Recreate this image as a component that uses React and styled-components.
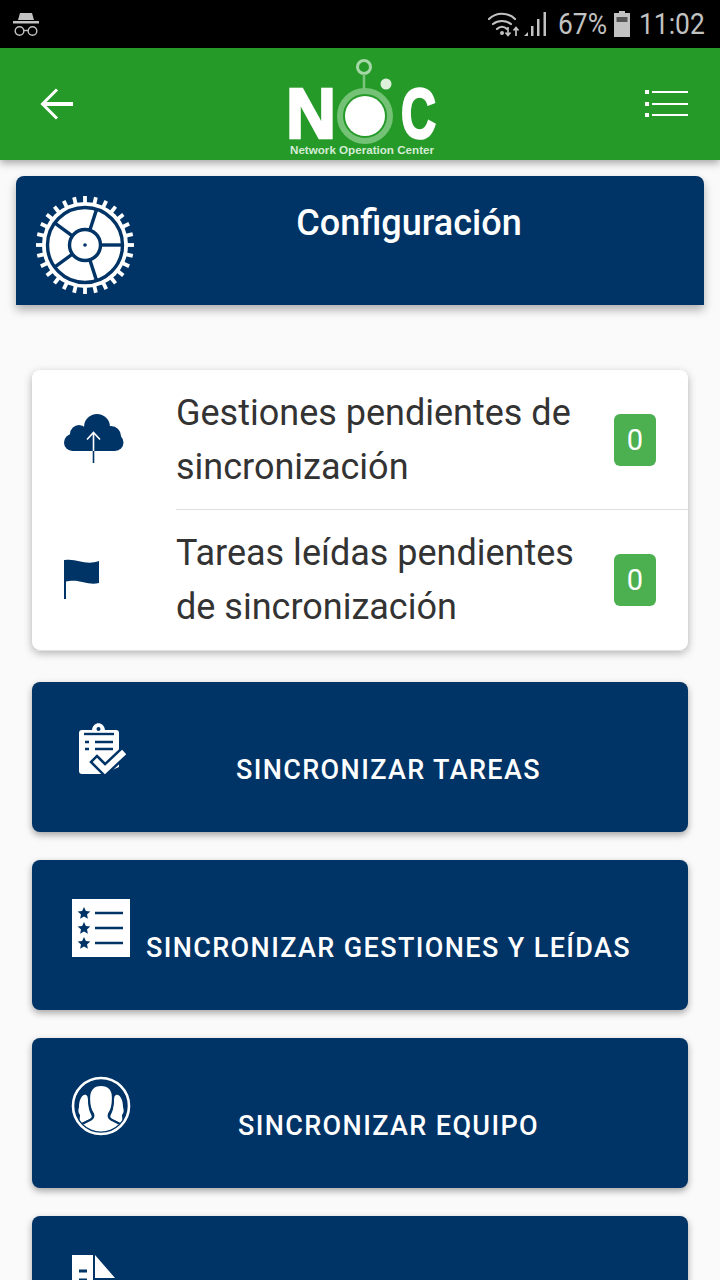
import React from "react";
import styled, { createGlobalStyle } from "styled-components";

const navy = "#003366";

const GlobalStyle = createGlobalStyle`
  html, body {
    margin: 0;
    padding: 0;
    background: #fafafa;
  }
  body {
    font-family: Roboto, "Liberation Sans", sans-serif;
  }
`;

const Page = styled.div`
  width: 720px;
  height: 1280px;
  overflow: hidden;
  background: #fafafa;
`;

const StatusBar = styled.div`
  height: 48px;
  background: #000;
  display: flex;
  align-items: center;
  justify-content: space-between;
  padding: 0 15px 0 13px;
  color: #c2c2c2;
`;

const StatusRight = styled.div`
  display: flex;
  align-items: center;
`;

const StatusText = styled.span`
  font-size: 30px;
  line-height: 48px;
  display: inline-block;
  transform: scaleX(0.88);
  transform-origin: left center;
  margin-left: ${(p) => p.$left}px;
  width: ${(p) => p.$width}px;
  white-space: nowrap;
`;

const BatterySlot = styled.span`
  margin-left: 8px;
  line-height: 0;
`;

const Header = styled.header`
  height: 112px;
  background: #259a29;
  box-shadow: 0 3px 8px rgba(0, 0, 0, 0.35);
  display: flex;
  align-items: center;
  justify-content: space-between;
  padding: 0 31px 0 40px;
  position: relative;
`;

const LogoSlot = styled.div`
  margin-left: 18px;
  line-height: 0;
`;

const TitleBar = styled.div`
  margin: 16px 16px 0;
  height: 129px;
  background: ${navy};
  border-radius: 8px 8px 0 0;
  box-shadow: 0 5px 10px rgba(0, 0, 0, 0.3);
  display: flex;
  align-items: flex-start;
  padding: 20px 0 0 20px;
  box-sizing: border-box;
`;

const Title = styled.h1`
  flex: 1;
  margin: 4px 0 0;
  padding-right: 20px;
  text-align: center;
  color: #fff;
  font-size: 36px;
  line-height: 46px;
  font-weight: 500;
`;

const PendingCard = styled.section`
  position: relative;
  margin: 65px 32px 0;
  background: #fff;
  border-radius: 8px;
  box-shadow: 0 3px 8px rgba(0, 0, 0, 0.3);

  &::after {
    content: "";
    position: absolute;
    left: -2px;
    right: -2px;
    bottom: -1px;
    height: 1px;
    background: #e2e2e2;
  }
`;

const PendingRow = styled.div`
  height: 140px;
  display: flex;
  box-sizing: border-box;
`;

const PendingIcon = styled.div`
  width: 144px;
  flex: none;
  padding: ${(p) => p.$top}px 0 0 32px;
  box-sizing: border-box;
`;

const PendingBody = styled.div`
  flex: 1;
  display: flex;
  align-items: center;
  justify-content: space-between;
  padding-right: 32px;
  border-bottom: ${(p) => (p.$last ? "none" : "1px solid #dedede")};
`;

const PendingText = styled.div`
  color: #333;
  font-size: 36px;
  line-height: 54px;
  width: 410px;
`;

const Badge = styled.span`
  width: 42px;
  height: 52px;
  border-radius: 6px;
  background: #4caf50;
  color: #fff;
  font-size: 29px;
  display: flex;
  align-items: center;
  justify-content: center;
`;

const Actions = styled.div`
  margin: 32px 32px 0;
  display: flex;
  flex-direction: column;
  gap: 28px;
`;

const ActionButton = styled.button`
  position: relative;
  height: 150px;
  flex: none;
  border: 0;
  border-radius: 8px;
  background: ${navy};
  box-shadow: 0 3px 7px rgba(0, 0, 0, 0.35);
  color: #fff;
  font-family: Roboto, "Liberation Sans", sans-serif;
  font-size: 27px;
  font-weight: 500;
  letter-spacing: 1.38px;
  padding: 26px 0 0 57px;
  text-align: center;
`;

const ActionIcon = styled.span`
  position: absolute;
  left: ${(p) => p.$left}px;
  top: ${(p) => p.$top}px;
  display: block;
  line-height: 0;
`;

const Incognito = () => (
  <svg width="26" height="26" viewBox="0 0 26 26">
    <path d="M7 2h12l2 7H5z" fill="#c2c2c2" />
    <rect x="0" y="10" width="26" height="2.5" fill="#c2c2c2" />
    <circle cx="6.5" cy="20" r="4.3" fill="none" stroke="#c2c2c2" strokeWidth="1.4" />
    <circle cx="19.5" cy="20" r="4.3" fill="none" stroke="#c2c2c2" strokeWidth="1.4" />
    <path d="M11 19.5h4" stroke="#c2c2c2" strokeWidth="1.4" />
  </svg>
);

const WifiSignal = () => (
  <svg width="62" height="28" viewBox="0 0 62 28">
    <g fill="none" stroke="#c2c2c2" strokeWidth="2.2" strokeLinecap="round">
      <path d="M1 9C8 2 20 2 27 9" />
      <path d="M5 14c5-4 13-4 18 0" />
      <path d="M9 19c3-3 7-3 10 0" />
    </g>
    <circle cx="14" cy="23" r="2" fill="#c2c2c2" />
    <path d="M20 17v8M17.5 22.5l2.5 3 2.5-3M28 26v-8M25.5 20.5l2.5-3 2.5 3" fill="none" stroke="#c2c2c2" strokeWidth="1.7" />
    <path d="M36 26l4-4v4zM43 26V16h2.5v10zM49 26V9h2.5v17zM55.5 26V2H58v24z" fill="#c2c2c2" />
  </svg>
);

const Battery = () => (
  <svg width="16" height="26" viewBox="0 0 16 26">
    <path d="M5 0h6v2h5v24H0V2h5z" fill="#c2c2c2" />
    <rect x="2.5" y="6" width="11" height="5" fill="#555" />
  </svg>
);

const BackArrow = () => (
  <svg width="33" height="32" viewBox="0 0 33 32" fill="none" stroke="#fff">
    <path d="M3 16h30" strokeWidth="4" />
    <path d="M17 1.5L2.5 16 17 30.5" strokeWidth="3" />
  </svg>
);

const MenuIcon = () => (
  <svg width="44" height="30" viewBox="0 0 44 30" fill="#fff">
    <rect x="0" y="1" width="4" height="4" />
    <rect x="0" y="13" width="4" height="4" />
    <rect x="0" y="24" width="4" height="4" />
    <rect x="7" y="2" width="36" height="2" />
    <rect x="7" y="14" width="36" height="2" />
    <rect x="7" y="25" width="36" height="2" />
  </svg>
);

const Logo = () => (
  <svg width="170" height="104" viewBox="-6 0 170 104">
    <text x="-3" y="86" fill="#fff" stroke="#fff" strokeWidth="2.6" fontFamily="Liberation Sans" fontWeight="700" fontSize="70" textLength="50" lengthAdjust="spacingAndGlyphs">N</text>
    <text x="112" y="86" fill="#fff" stroke="#fff" strokeWidth="2.6" fontFamily="Liberation Sans" fontWeight="700" fontSize="70" textLength="35" lengthAdjust="spacingAndGlyphs">C</text>
    <circle cx="76" cy="64" r="25" fill="none" stroke="#73c275" strokeWidth="6" />
    <circle cx="76" cy="64" r="20" fill="#fff" />
    <circle cx="75" cy="15" r="6.5" fill="none" stroke="#a5d8a6" strokeWidth="3" />
    <path d="M75 22v15" stroke="#7cc57e" strokeWidth="2.5" />
    <circle cx="97" cy="32" r="5.5" fill="#dcf0dc" />
    <text x="1" y="102" fill="#d4ecd4" fontFamily="Liberation Sans" fontWeight="700" fontSize="11" textLength="144" lengthAdjust="spacingAndGlyphs">Network Operation Center</text>
  </svg>
);

const gearTeeth = Array.from({ length: 28 }, (_, i) => (i * 360) / 28);
const gearSpokes = [0, 72, 144, 216, 288];

const Gear = () => (
  <svg width="98" height="98" viewBox="-49 -49 98 98">
    {gearTeeth.map((angle) => (
      <rect key={angle} x="-1.9" y="-49" width="3.8" height="8" fill="#fff" transform={`rotate(${angle})`} />
    ))}
    <circle r="43" fill="#fff" />
    <circle r="37.5" fill="#fff" stroke={navy} strokeWidth="3.4" />
    {gearSpokes.map((angle) => (
      <rect key={angle} x="14" y="-1.7" width="24" height="3.4" fill={navy} transform={`rotate(${angle})`} />
    ))}
    <circle r="15.5" fill="#fff" stroke={navy} strokeWidth="3.4" />
    <circle r="1.8" fill={navy} />
  </svg>
);

const CloudUp = () => (
  <svg width="60" height="52" viewBox="0 0 60 52">
    <g fill={navy}>
      <circle cx="33" cy="15" r="13" />
      <circle cx="15" cy="22" r="9" />
      <circle cx="47" cy="24" r="10" />
      <rect x="0" y="22" width="59.5" height="17" rx="8.5" />
    </g>
    <path d="M29.5 39V21M23 27.5l6.5-7 6.5 7" fill="none" stroke="#fff" strokeWidth="1.6" />
    <path d="M29.5 39v12" stroke={navy} strokeWidth="1.6" />
  </svg>
);

const Flag = () => (
  <svg width="36" height="40" viewBox="0 0 36 40">
    <path d="M0 1h2v39H0z" fill={navy} />
    <path d="M1 1c12-2 20 6 34 1v22c-12 3-20-5-34-1z" fill={navy} />
  </svg>
);

const ClipboardCheck = () => (
  <svg width="48" height="54" viewBox="0 0 48 54">
    <path d="M3 8h10c1-9 12-9 13 0h11c2 0 3 1 3 3v34L24 52H3c-2 0-3-1-3-3V11c0-2 1-3 3-3z" fill="#fff" />
    <circle cx="19.5" cy="7" r="2" fill={navy} />
    <path d="M5 12h30" stroke={navy} strokeWidth="2.4" />
    <path d="M16 20h18M16 27h18" stroke={navy} strokeWidth="2.6" />
    <path d="M6 20h4M6 27h4" stroke={navy} strokeWidth="2.6" />
    <path d="M18 40l8 8 17-16" fill="none" stroke={navy} strokeWidth="11" strokeLinecap="square" />
    <path d="M18 40l8 8 17-16" fill="none" stroke="#fff" strokeWidth="6" strokeLinecap="square" />
  </svg>
);

const StarRow = ({ y }) => (
  <g fill={navy}>
    <path d={`M12 ${y - 6}l1.9 4 4.4.5-3.3 3 .9 4.3-3.9-2.2-3.9 2.2.9-4.3-3.3-3 4.4-.5z`} />
    <rect x="23" y={y - 1.25} width="28" height="2.5" />
  </g>
);

const StarList = () => (
  <svg width="58" height="58" viewBox="0 0 58 58">
    <rect width="58" height="58" fill="#fff" />
    <StarRow y={14} />
    <StarRow y={29} />
    <StarRow y={44} />
  </svg>
);

const TeamCircle = () => (
  <svg width="60" height="60" viewBox="0 0 60 60">
    <defs>
      <clipPath id="team-disc">
        <circle cx="30" cy="30" r="25.5" />
      </clipPath>
    </defs>
    <circle cx="30" cy="30" r="28" fill="none" stroke="#fff" strokeWidth="2.6" />
    <g clipPath="url(#team-disc)" fill="#fff">
      <path d="M13 19c3-1 4 2 4 5l1 9c1 4 3 6 3 9l-12 6c-1-3 0-6 0-9-2-2-2-5-1-8 0-6 2-11 5-12z" />
      <path d="M47 19c-3-1-4 2-4 5l-1 9c-1 4-3 6-3 9l12 6c1-3 0-6 0-9 2-2 2-5 1-8 0-6-2-11-5-12z" />
      <path
        d="M30 9c8 0 12 5 12 13 0 7-1 12-4 16-1 3 0 5 5 7l8 4 3 11H6l3-11 8-4c5-2 6-4 5-7-3-4-4-9-4-16 0-8 4-13 12-13z"
        stroke={navy}
        strokeWidth="2.2"
      />
    </g>
  </svg>
);

const DocIcon = () => (
  <svg width="44" height="60" viewBox="0 0 44 60">
    <path d="M0 0h21v25h22v35H0z" fill="#fff" />
    <path d="M23 0l20 23H23z" fill="#fff" />
    <path d="M7 16h8M7 25h8" stroke={navy} strokeWidth="3" />
  </svg>
);

const actions = [
  { id: "tareas", label: "SINCRONIZAR TAREAS", Icon: ClipboardCheck, left: 47, top: 40 },
  { id: "gestiones", label: "SINCRONIZAR GESTIONES Y LEÍDAS", Icon: StarList, left: 40, top: 39 },
  { id: "equipo", label: "SINCRONIZAR EQUIPO", Icon: TeamCircle, left: 39, top: 38 },
  { id: "otros", label: "", Icon: DocIcon, left: 40, top: 39 },
];

export default function App() {
  return (
    <Page>
      <GlobalStyle />
      <StatusBar>
        <Incognito />
        <StatusRight>
          <WifiSignal />
          <StatusText $width={48} $left={8}>67%</StatusText>
          <BatterySlot><Battery /></BatterySlot>
          <StatusText $width={66} $left={9}>11:02</StatusText>
        </StatusRight>
      </StatusBar>
      <Header>
        <BackArrow />
        <LogoSlot><Logo /></LogoSlot>
        <MenuIcon />
      </Header>
      <TitleBar>
        <Gear />
        <Title>Configuración</Title>
      </TitleBar>
      <PendingCard>
        <PendingRow>
          <PendingIcon $top={42}><CloudUp /></PendingIcon>
          <PendingBody>
            <PendingText>Gestiones pendientes de sincronización</PendingText>
            <Badge>0</Badge>
          </PendingBody>
        </PendingRow>
        <PendingRow>
          <PendingIcon $top={49}><Flag /></PendingIcon>
          <PendingBody $last>
            <PendingText>Tareas leídas pendientes de sincronización</PendingText>
            <Badge>0</Badge>
          </PendingBody>
        </PendingRow>
      </PendingCard>
      <Actions>
        {actions.map(({ id, label, Icon, left, top }) => (
          <ActionButton key={id}>
            <ActionIcon $left={left} $top={top}><Icon /></ActionIcon>
            {label}
          </ActionButton>
        ))}
      </Actions>
    </Page>
  );
}
